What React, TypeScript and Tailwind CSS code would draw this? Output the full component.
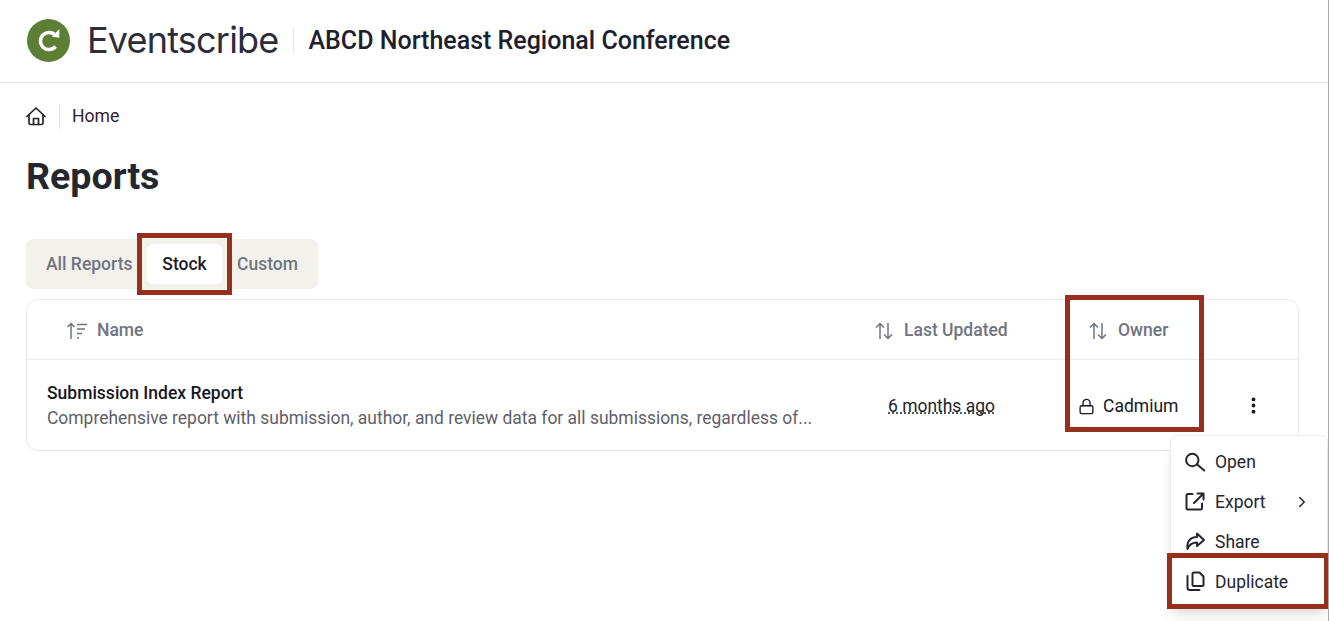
import { ChevronRight, EllipsisVertical, Lock } from "lucide-react"

function SortIcon() {
  return (
    <svg width="20" height="20" viewBox="0 0 20 20" fill="none" stroke="currentColor" strokeWidth="1.5" className="shrink-0">
      <path d="M6 18V2.500M2 6.500l4-4 4 4" />
      <path d="M14 2v15.500M10 13.500l4 4 4-4" />
    </svg>
  )
}

function SortAscIcon() {
  return (
    <svg width="22" height="20" viewBox="0 0 22 20" fill="none" stroke="currentColor" strokeWidth="1.5" className="shrink-0">
      <path d="M5 18V2.500M1.500 6l3.500-3.500L8.500 6" />
      <path d="M11 3.500h10M11 8h8M11 12.500h5M11 17h2" />
    </svg>
  )
}

function HomeIcon() {
  return (
    <svg width="20" height="19" viewBox="0 0 20 19" fill="none" stroke="currentColor" strokeWidth="1.7" strokeLinecap="round" strokeLinejoin="round" className="shrink-0">
      <path d="M0.900 9.500 10 1l9.100 8.500" />
      <path d="M3 7.500V16a1.500 1.500 0 0 0 1.500 1.500h11A1.500 1.500 0 0 0 17 16V7.500" />
      <path d="M7.500 17.500V11.500h5v6" />
    </svg>
  )
}

function Highlight({ className }: { className: string }) {
  return <div className={`absolute border-[5px] border-[#96301c] pointer-events-none ${className}`} />
}

const iconProps = {
  width: 24,
  height: 24,
  viewBox: "0 0 24 24",
  fill: "none",
  stroke: "currentColor",
  strokeWidth: 2,
  strokeLinecap: "round" as const,
  strokeLinejoin: "round" as const,
}

const menuItems = [
  {
    label: "Open",
    icon: (
      <svg {...iconProps}>
        <circle cx="9.300" cy="10" r="6.200" />
        <path d="M13.900 14.300 21.300 20.500" />
      </svg>
    ),
  },
  {
    label: "Export",
    more: true,
    icon: (
      <svg {...iconProps}>
        <path d="M9.500 4H5a1.500 1.500 0 0 0-1.500 1.500V18A1.500 1.500 0 0 0 5 19.500h12.500A1.500 1.500 0 0 0 19 18v-4.500" />
        <path d="M11 13l9.500-9.500M14.500 3.500h6v6" />
      </svg>
    ),
  },
  {
    label: "Share",
    icon: (
      <svg {...iconProps}>
        <path d="M14 3.500 21 10l-7 6v-3.500c-4 0-7.500 1.500-9.500 6.500C3.500 12 7 7 14 7Z" />
      </svg>
    ),
  },
  {
    label: "Duplicate",
    icon: (
      <svg {...iconProps}>
        <path d="M11 2.500h5.500L20.500 6.500v8a1.500 1.500 0 0 1-1.500 1.500h-8a1.500 1.500 0 0 1-1.500-1.500V4A1.500 1.500 0 0 1 11 2.500Z" />
        <path d="M4.500 6v11.500A2.500 2.500 0 0 0 7 20h9.500" />
      </svg>
    ),
  },
]

export default function App() {
  return (
    <div className="relative h-[621px] w-[1329px] overflow-hidden border-r border-[#aaaaaa] bg-white text-[#24242e] font-['Roboto',sans-serif]">
      {/* Header */}
      <header className="flex h-[83px] items-center border-b border-[#e6e6e6] pb-0.5 pl-[27px]">
        <div className="flex h-[43px] w-[43px] items-center justify-center rounded-full bg-[#5c7f35]">
          <svg width="43" height="43" viewBox="0 0 43 43" fill="none">
            <path d="M28.500 16.500A8.500 8.500 0 1 0 28.500 27.500" stroke="white" strokeWidth="3.500" />
            <path d="M32.300 10v8.700L25 17.700Z" fill="white" />
          </svg>
        </div>
        <span className="ml-[17px] text-[36px] leading-none tracking-[-0.8px] text-[#2c2c3a] font-['Inter',sans-serif] font-normal">Eventscribe</span>
        <div className="ml-[14px] h-[25px] w-px bg-[#e6e6e6]" />
        <h2 className="ml-[15px] pt-0.5 text-[25px] font-medium text-[#20202c]">ABCD Northeast Regional Conference</h2>
      </header>

      <main className="px-[26px]">
        {/* Breadcrumb */}
        <div className="mt-5 flex h-[26px] items-center">
          <HomeIcon />
          <div className="ml-[13px] h-[25px] w-px bg-[#e0e0e0]" />
          <span className="ml-3 text-[17.6px] text-[#33222a]">Home</span>
        </div>

        <h1 className="mt-[25px] text-[37.6px] leading-[44px] font-bold text-[#24272e]">Reports</h1>

        {/* Tabs */}
        <div className="mt-[41px] flex h-[50px] w-[292px] items-center rounded-lg bg-[#f3f1ec] pl-5 text-[17.5px] font-medium text-[#6f7480]">
          <span className="w-[101px]">All Reports</span>
          <span className="flex h-10 w-[75px] items-center justify-center rounded-md bg-white text-[#1b1b25]">Stock</span>
          <span className="ml-[15px]">Custom</span>
        </div>

        {/* Table */}
        <div className="mt-2.5 h-[152px] w-[1273px] rounded-xl border border-[#e8e8e8]">
          <div className="flex h-[60px] items-center border-b border-[#ebebeb] pt-0.5 text-[17.5px] font-medium text-[#6f7480]">
            <div className="ml-[39px] flex w-[808px] items-center gap-[9px]">
              <SortAscIcon />
              <span>Name</span>
            </div>
            <div className="flex w-[214px] items-center gap-2.5">
              <SortIcon />
              <span>Last Updated</span>
            </div>
            <div className="flex items-center gap-2.5">
              <SortIcon />
              <span>Owner</span>
            </div>
          </div>
          <div className="flex h-[90px] items-center">
            <div className="ml-5 w-[814px]">
              <div className="pt-px text-[17.5px] leading-[24px] font-medium text-[#17171f]">Submission Index Report</div>
              <div className="mt-px text-[17.47px] leading-[24px] text-[#5f6068] whitespace-nowrap">Comprehensive report with submission, author, and review data for all submissions, regardless of...</div>
            </div>
            <div className="ml-[27px] w-[190px] pt-0.5">
              <span className="text-[17.45px] text-[#22222a] underline decoration-dotted decoration-[#22222a] underline-offset-1 [text-decoration-skip-ink:none]">6 months ago</span>
            </div>
            <div className="flex w-[165px] items-center gap-2 pt-0.5 text-[17.5px] text-[#17171f]">
              <Lock size={17} strokeWidth={1.9} />
              <span>Cadmium</span>
            </div>
            <EllipsisVertical size={21} strokeWidth={2.4} className="text-[#17171f]" />
          </div>
        </div>
      </main>

      {/* Row menu */}
      <div className="absolute left-[1170px] top-[435px] w-[158px] rounded-lg border border-[#ececec] bg-white py-[6px] shadow-lg">
        {menuItems.map((item) => (
          <div key={item.label} className="flex h-10 items-center pr-4 pl-3 text-[17.5px] text-[#24242e]">
            <span className="flex w-8 shrink-0">{item.icon}</span>
            <span>{item.label}</span>
            {item.more && <ChevronRight size={18} className="ml-auto" />}
          </div>
        ))}
      </div>

      {/* Annotation boxes */}
      <Highlight className="left-[137px] top-[233px] h-[62px] w-[95px]" />
      <Highlight className="left-[1065px] top-[295px] h-[137px] w-[139px]" />
      <Highlight className="left-[1167px] top-[553px] h-[56px] w-[162px]" />
    </div>
  )
}
